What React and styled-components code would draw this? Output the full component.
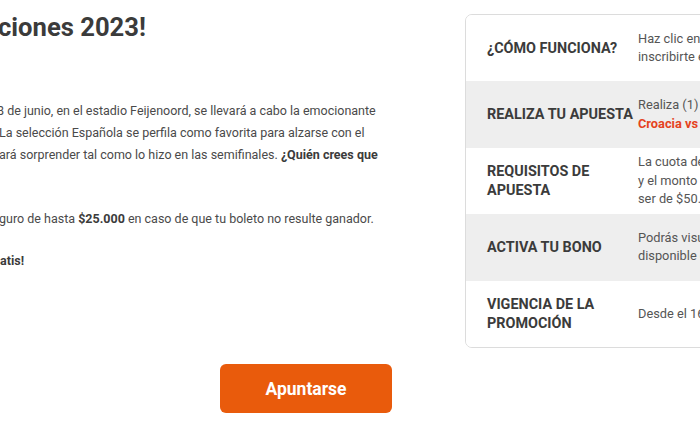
import styled, { createGlobalStyle } from 'styled-components'

const GlobalStyle = createGlobalStyle`
    html, body {
        margin: 0;
        padding: 0;
        overflow: hidden;
        background: #ffffff;
    }
    body {
        font-family: Roboto, "Liberation Sans", Arial, sans-serif;
        color: #444444;
    }
`

const Page = styled.div`
    display: flex;
    flex-direction: column;
    padding-top: 11px;
    width: 700px;
`

const Top = styled.div`
    display: flex;
    flex-direction: row;
    align-items: flex-start;
`

const Main = styled.div`
    display: flex;
    flex-direction: column;
    width: 467px;
    flex-shrink: 0;
    margin-left: -2px;
`

const Title = styled.h1`
    font-size: 25.6px;
    line-height: 32px;
    font-weight: 700;
    color: #3b3b3b;
    margin: 0 0 57px;
    white-space: nowrap;
`

const Paragraph = styled.p`
    font-size: 12.5px;
    line-height: 22px;
    color: #4a4a4a;
    margin: 0 0 20px;
    white-space: nowrap;
`

const Line = styled.span`
    display: block;
    margin-left: ${(props) => props.shift || 0}px;
`

const Strong = styled.strong`
    font-weight: 700;
    color: #3b3b3b;
`

const Steps = styled.div`
    display: grid;
    grid-template-rows: repeat(5, 1fr);
    width: 360px;
    height: 334px;
    margin-top: 3px;
    flex-shrink: 0;
    box-sizing: border-box;
    border: 1px solid #dcdcdc;
    border-radius: 7px;
    overflow: hidden;
`

const Step = styled.div`
    display: flex;
    flex-direction: row;
    align-items: center;
    padding-left: 21px;
    background-color: ${(props) => (props.shaded ? '#eeeeee' : '#ffffff')};
`

const StepLabel = styled.div`
    width: 151px;
    flex-shrink: 0;
    font-size: 14.4px;
    line-height: 19px;
    font-weight: 700;
    color: #3b3b3b;
    text-transform: uppercase;
`

const StepText = styled.div`
    font-size: 12.8px;
    line-height: 18.5px;
    color: #555555;
    white-space: nowrap;
`

const Highlight = styled.span`
    color: #e5421d;
    font-weight: 700;
`

const ButtonRow = styled.div`
    display: flex;
    justify-content: center;
    width: 612px;
    margin-top: 16px;
`

const Button = styled.button`
    width: 172px;
    height: 49px;
    border: none;
    border-radius: 6px;
    background-color: #e95b0c;
    color: #ffffff;
    font-family: Roboto, "Liberation Sans", Arial, sans-serif;
    font-size: 17.5px;
    font-weight: 700;
    cursor: pointer;
`

const steps = [
    {
        label: '¿Cómo funciona?',
        text: <>Haz clic en “Apuntarse” para<br />inscribirte en la promoción.</>,
    },
    {
        label: 'Realiza tu apuesta',
        text: <>Realiza (1) apuesta simple al partido<br /><Highlight>Croacia vs España</Highlight></>,
    },
    {
        label: 'Requisitos de apuesta',
        text: <>La cuota debe ser mínimo de 1.50<br />y el monto mínimo de apuesta debe<br />ser de $50.000.</>,
    },
    {
        label: 'Activa tu bono',
        text: <>Podrás visualizar tu bono<br />disponible en tu cuenta.</>,
    },
    {
        label: 'Vigencia de la promoción',
        text: <>Desde el 16 de junio de 2023.</>,
    },
]

function App() {
    return (
        <>
            <GlobalStyle />
            <Page>
                <Top>
                    <Main>
                        <Title>ciones 2023!</Title>
                        <Paragraph>
                            <Line shift={-1}>8 de junio, en el estadio Feijenoord, se llevará a cabo la emocionante</Line>
                            <Line shift={1}>La selección Española se perfila como favorita para alzarse con el</Line>
                            <Line shift={1}>ará sorprender tal como lo hizo en las semifinales. <Strong>¿Quién crees que</Strong></Line>
                            <Line>&nbsp;</Line>
                        </Paragraph>
                        <Paragraph>
                            <Line shift={1}>guro de hasta <Strong>$25.000</Strong> en caso de que tu boleto no resulte ganador.</Line>
                        </Paragraph>
                        <Paragraph>
                            <Line shift={2}><Strong>atis!</Strong></Line>
                        </Paragraph>
                    </Main>
                    <Steps>
                        {steps.map((step, index) => (
                            <Step key={step.label} shaded={index % 2 === 1}>
                                <StepLabel>{step.label}</StepLabel>
                                <StepText>{step.text}</StepText>
                            </Step>
                        ))}
                    </Steps>
                </Top>
                <ButtonRow>
                    <Button>Apuntarse</Button>
                </ButtonRow>
            </Page>
        </>
    )
}

export default App
